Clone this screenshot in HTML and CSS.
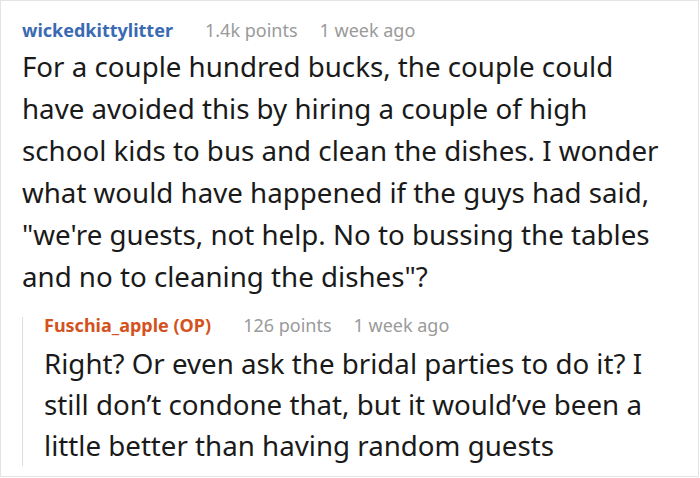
FILE: index.html
```html
<!DOCTYPE html>
<html>
<head>
<meta charset="utf-8">
<link rel="stylesheet" href="styles.css">
</head>
<body>
<div class="card">
  <div class="comment">
    <div class="meta">
      <span class="user">wickedkittylitter</span>
      <span class="info">1.4k points</span>
      <span class="info">1 week ago</span>
    </div>
    <p class="text">For a couple hundred bucks, the couple could have avoided this by hiring a couple of high school kids to bus and clean the dishes. I wonder what would have happened if the guys had said, "we're guests, not help. No to bussing the tables and no to cleaning the dishes"?</p>
    <div class="reply">
      <div class="meta">
        <span class="user op">Fuschia_apple (OP)</span>
        <span class="info">126 points</span>
        <span class="info">1 week ago</span>
      </div>
      <p class="text">Right? Or even ask the bridal parties to do it? I still don’t condone that, but it would’ve been a little better than having random guests</p>
    </div>
  </div>
</div>
</body>
</html>
```
FILE: styles.css
```css
html, body {
  margin: 0;
  padding: 0;
  background: #fff;
}
.card {
  width: 699px;
  height: 477px;
  box-sizing: border-box;
  border: 1px solid #e4e4e4;
  overflow: hidden;
  font-family: "Noto Sans", "Open Sans", sans-serif;
}
.comment {
  padding: 17px 28px 0 21px;
}
.meta {
  display: flex;
  gap: 22px;
  font-size: 18px;
  line-height: 24px;
}
.user {
  font-weight: bold;
  color: #3a6ab3;
  margin-right: 10px;
}
.user.op {
  color: #d4521d;
}
.info {
  color: #9a9a9a;
}
.text {
  margin: 2.9px 0 0;
  font-size: 27.7px;
  line-height: 42px;
  color: #1a1a1a;
}
.reply {
  margin-top: 28.8px;
  border-left: 1px solid #dedede;
  padding-left: 21px;
}
.reply .meta {
  margin-top: -8.5px;
  line-height: 17px;
}
.reply .text {
  margin: 9.2px 0 -7.7px;
  line-height: 41px;
}
```
